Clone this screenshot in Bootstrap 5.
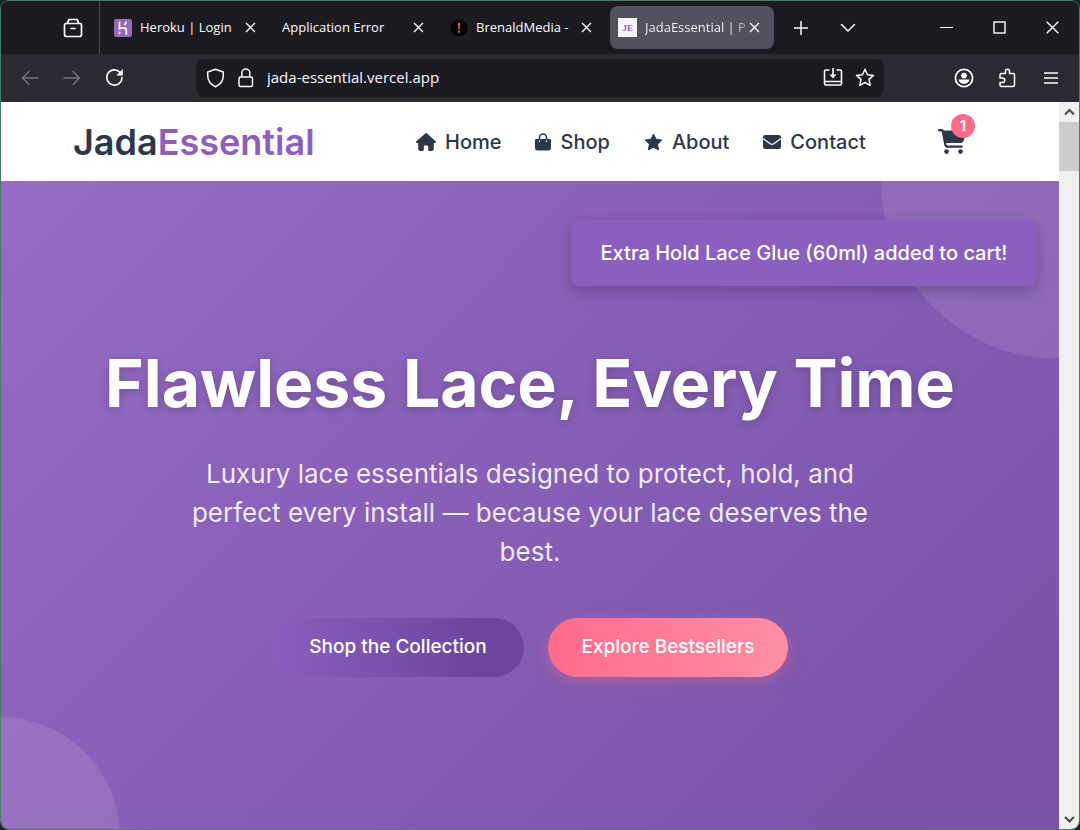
<!DOCTYPE html>
<html lang="en">
<head>
<meta charset="utf-8">
<meta name="viewport" content="width=device-width, initial-scale=1">
<title>JadaEssential</title>
<link href="https://cdn.jsdelivr.net/npm/bootstrap@5.3.0/dist/css/bootstrap.min.css" rel="stylesheet">
<style>
:root { --ink: #2d3748; --brand: #8b5fbf; --pink: #ff6b8b; --chrome: #2b2a33; --chrome-dark: #1c1b22; }
body { background: #12281f; font-family: Inter, sans-serif; }
svg { display: block; flex: none; }
.ui { font-family: "Open Sans", sans-serif; color: #fbfbfe; }
.window-frame { border: 1px solid #4b7d66; border-radius: 9px; }
.tab-strip { height: 53px; background: var(--chrome-dark); }
.recent { width: 99px; padding-left: 62px; border-right: 1px solid #4a4953; }
.plain-btn { border: 0; padding: 0; background: none; color: inherit; }
.tab-list { padding-left: 6px; }
.tab-item { width: 164px; height: 43px; padding: 0 14px 0 8px; border-radius: 8px; font-size: 14px; }
.tab-item.current { background: #52525e; }
.tab-label { font-size: 13px; }
.tab-title { background: linear-gradient(90deg, #fbfbfe 84%, #77767f) text; color: transparent; -webkit-background-clip: text; }
.tool-bar { height: 48px; background: var(--chrome); padding: 4px 18px 5px 20px; }
.muted-icon { color: #75747d; }
.address { height: 38px; margin: 0 70px 0 72px; background: var(--chrome-dark); border-radius: 8px; padding: 0 9px 0 10px; }
.address input { background: none; border: 0; outline: 0; color: #fbfbfe; font-size: 15px; min-width: 0; }
.site-header { height: 79px; padding: 0 93px 0 72px; background: #fff; color: var(--ink); }
.brand-name { width: 343px; font-size: 36px; line-height: 44px; font-weight: 600; color: var(--ink); }
.brand-name span { color: var(--brand); }
.site-nav { gap: 34px; }
.site-link { gap: 9px; color: var(--ink); font-size: 20px; font-weight: 500; white-space: nowrap; }
.cart-link { color: var(--ink); }
.count { top: -15px; right: -9px; width: 24px; height: 24px; background: var(--pink); font-size: 15px; font-weight: 600; }
.hero { background: linear-gradient(135deg, #966dc5 0%, #8961b9 38%, #7752a7 100%); padding: 162px 72px 148px; }
.orb { position: absolute; border-radius: 50%; background: rgba(255,255,255,.1); }
.orb-top { width: 356px; height: 356px; top: -178px; right: -178px; }
.orb-bottom { width: 240px; height: 240px; bottom: -128px; left: -121px; }
.hero h1 { font-size: 66px; line-height: 80px; font-weight: 700; margin-bottom: 31px; text-shadow: 0 2px 10px rgba(0,0,0,.2); }
.hero p { max-width: 700px; font-size: 26px; line-height: 39px; margin-bottom: 47px; color: rgba(255,255,255,.88); }
.pill { height: 59px; border: 0; border-radius: 30px; color: #fff; font-size: 19px; font-weight: 500; white-space: nowrap; }
.pill-violet { width: 252px; background: linear-gradient(90deg, #8b5fbf, #6b46a0 80%); }
.pill-pink { width: 240px; background: linear-gradient(90deg, #ff6b8b, #ff8fa3); box-shadow: 0 4px 15px rgba(255,107,139,.35); }
.notice { position: absolute; top: 39px; right: 22px; width: 466px; height: 66px; border-radius: 8px; background: #8b5fbf; box-shadow: 0 5px 15px rgba(0,0,0,.22); font-size: 20px; font-weight: 500; white-space: nowrap; }
.scroll-rail { width: 20px; background: #f0f0f0; color: #505050; }
.scroll-thumb { height: 49px; background: #cdcdcd; }
</style>
</head>
<body>
<div class="window-frame d-flex flex-column min-vh-100 overflow-hidden">
  <div class="ui tab-strip d-flex align-items-center">
    <div class="recent h-100 d-flex align-items-center">
      <button class="plain-btn" aria-label="Recent browsing"><svg width="20" height="20" viewBox="0 0 20 20" fill="none" stroke="currentColor" stroke-width="1.700" stroke-linecap="round"><path d="M4.500 4.500 6 1.500h8l1.500 3M3 5.500h14A1.500 1.500 0 0 1 18.500 7v9.500a2 2 0 0 1-2 2h-13a2 2 0 0 1-2-2V7A1.500 1.500 0 0 1 3 5.500M8 10.500h4"/></svg></button>
    </div>
    <div class="tab-list d-flex gap-1">
      <div class="tab-item d-flex align-items-center">
        <svg width="18" height="18" viewBox="0 0 18 18"><rect width="18" height="18" rx="2" fill="#9569b5"/><path d="M5.500 2.500v7.200c3-1.500 6.800-1.300 6.800 1.300v4.800M12 2.500c0 1.500-.5 2.500-1.400 3.500" fill="none" stroke="#fff" stroke-width="1.700"/><path d="m4.700 12 2.400 2-2.400 2z" fill="#fff"/></svg>
        <span class="tab-label flex-fill text-nowrap ms-2">Heroku | Login</span>
        <button class="plain-btn" aria-label="Close tab"><svg width="11" height="11" viewBox="0 0 11 11" stroke="currentColor" stroke-width="1.400"><path d="m1 1 9 9m0-9-9 9"/></svg></button>
      </div>
      <div class="tab-item d-flex align-items-center">
        <span class="tab-label flex-fill text-nowrap">Application Error</span>
        <button class="plain-btn" aria-label="Close tab"><svg width="11" height="11" viewBox="0 0 11 11" stroke="currentColor" stroke-width="1.400"><path d="m1 1 9 9m0-9-9 9"/></svg></button>
      </div>
      <div class="tab-item d-flex align-items-center">
        <svg width="18" height="18" viewBox="0 0 18 18"><circle cx="9" cy="9" r="8.500" fill="#000"/><path d="M8 4h2l-.4 6.500H8.400z" fill="#ff6b2c"/><circle cx="9" cy="12.800" r="1.100" fill="#ff6b2c"/></svg>
        <span class="tab-label flex-fill text-nowrap ms-2">BrenaldMedia -</span>
        <button class="plain-btn" aria-label="Close tab"><svg width="11" height="11" viewBox="0 0 11 11" stroke="currentColor" stroke-width="1.400"><path d="m1 1 9 9m0-9-9 9"/></svg></button>
      </div>
      <div class="tab-item current d-flex align-items-center">
        <svg width="19" height="19" viewBox="0 0 19 19"><rect width="19" height="19" fill="#f7f5fc"/><text x="4.500" y="13" font-family="Liberation Serif, serif" font-weight="700" font-size="9" fill="#8461b8">JE</text></svg>
        <span class="tab-label tab-title flex-fill text-nowrap ms-2">JadaEssential | P</span>
        <button class="plain-btn" aria-label="Close tab"><svg width="11" height="11" viewBox="0 0 11 11" stroke="currentColor" stroke-width="1.400"><path d="m1 1 9 9m0-9-9 9"/></svg></button>
      </div>
    </div>
    <div class="d-flex align-items-center ms-3 gap-3">
      <button class="plain-btn ps-1 pe-3" aria-label="New tab"><svg width="14" height="14" viewBox="0 0 14 14" stroke="currentColor" stroke-width="1.500"><path d="M7 0v14M0 7h14"/></svg></button>
      <button class="plain-btn" aria-label="List tabs"><svg width="16" height="10" viewBox="0 0 16 10" fill="none" stroke="currentColor" stroke-width="1.500" stroke-linecap="round" stroke-linejoin="round"><path d="m1.500 1.500 6.500 6.500 6.500-6.500"/></svg></button>
    </div>
    <div class="d-flex align-items-center ms-auto gap-4 pe-3">
      <button class="plain-btn pe-3" aria-label="Minimize"><svg width="13" height="13" viewBox="0 0 13 13" stroke="currentColor" stroke-width="1.200"><path d="M0 6.500h13"/></svg></button>
      <button class="plain-btn pe-3" aria-label="Maximize"><svg width="13" height="13" viewBox="0 0 13 13" fill="none" stroke="currentColor" stroke-width="1.400"><rect x="1" y="1" width="11" height="11"/></svg></button>
      <button class="plain-btn me-1" aria-label="Close window"><svg width="13" height="13" viewBox="0 0 13 13" stroke="currentColor" stroke-width="1.400"><path d="m.7.7 11.600 11.600m0-11.600L.7 12.300"/></svg></button>
    </div>
  </div>

  <div class="ui tool-bar d-flex align-items-center">
    <div class="d-flex align-items-center gap-4">
      <button class="plain-btn muted-icon" aria-label="Back"><svg width="18" height="16" viewBox="0 0 18 16" fill="none" stroke="currentColor" stroke-width="1.500" stroke-linecap="round" stroke-linejoin="round"><path d="M17 8H1.500M8 1.500 1.500 8 8 14.500"/></svg></button>
      <button class="plain-btn muted-icon" aria-label="Forward"><svg width="18" height="16" viewBox="0 0 18 16" fill="none" stroke="currentColor" stroke-width="1.500" stroke-linecap="round" stroke-linejoin="round"><path d="M1 8h15.500M10 1.500 16.500 8 10 14.500"/></svg></button>
      <button class="plain-btn" aria-label="Reload"><svg width="19" height="19" viewBox="0 0 19 19"><path d="M14.900 4.200A7.600 7.600 0 1 0 17 9.500" fill="none" stroke="currentColor" stroke-width="1.600" stroke-linecap="round"/><path d="M17.800 1v6.500h-6.500z" fill="currentColor"/></svg></button>
    </div>
    <div class="address d-flex align-items-center flex-fill gap-2">
      <svg width="19" height="20" viewBox="0 0 19 20" fill="none" stroke="currentColor" stroke-width="1.500" stroke-linejoin="round"><path d="M9.500 1.200 17.300 4v3.500c0 5-3 9-7.800 11.300C4.700 16.500 1.700 12.500 1.700 7.500V4z"/></svg>
      <svg class="ms-1" width="18" height="20" viewBox="0 0 17 20" fill="none" stroke="currentColor" stroke-width="1.500"><rect x="1.500" y="9" width="13.500" height="9.500" rx="1.500"/><path d="M4.300 9V5a4 4 0 0 1 8 0v4"/></svg>
      <input class="flex-fill ms-1 p-0" type="text" aria-label="Address" value="jada-essential.vercel.app">
      <button class="plain-btn" aria-label="Install app"><svg width="20" height="19" viewBox="0 0 20 19" fill="none" stroke="currentColor" stroke-width="1.600" stroke-linejoin="round"><path d="M6.500 2H3a1.500 1.500 0 0 0-1.500 1.500v12A1.500 1.500 0 0 0 3 17h14a1.500 1.500 0 0 0 1.500-1.500v-12A1.500 1.500 0 0 0 17 2h-3.500M1.500 13.500h17M10 0v9"/><path d="M6.500 6.500h7L10 10.500z" fill="currentColor" stroke="none"/></svg></button>
      <button class="plain-btn ms-1" aria-label="Bookmark"><svg width="20" height="19" viewBox="0 0 20 19" fill="none" stroke="currentColor" stroke-width="1.500" stroke-linejoin="round"><path d="m10 1.200 2.500 5.500 6 .7-4.500 4 1.200 6L10 14.500l-5.200 2.900 1.200-6-4.500-4 6-.7z"/></svg></button>
    </div>
    <div class="d-flex align-items-center gap-4">
      <button class="plain-btn" aria-label="Account"><svg width="20" height="20" viewBox="0 0 20 20"><circle cx="10" cy="10" r="8.600" fill="none" stroke="currentColor" stroke-width="1.800"/><circle cx="10" cy="7.600" r="2.900" fill="currentColor"/><path d="M4.500 11.500h11c-.4 2.800-2.600 4.400-5.500 4.400s-5.100-1.600-5.500-4.400" fill="currentColor"/></svg></button>
      <button class="plain-btn" aria-label="Extensions"><svg width="19" height="20" viewBox="0 0 19 20" fill="none" stroke="currentColor" stroke-width="1.500" stroke-linejoin="round"><path d="M2 9V7a1.500 1.500 0 0 1 1.500-1.500h4V3.200a2 2 0 0 1 4 0v2.300H15a1.500 1.500 0 0 1 1.500 1.500v10a1.500 1.500 0 0 1-1.500 1.500H3.500A1.500 1.500 0 0 1 2 17v-2.500h2.500a2 2 0 0 0 0-4.500H2z"/></svg></button>
      <button class="plain-btn" aria-label="Menu"><svg width="20" height="16" viewBox="0 0 20 16" stroke="currentColor" stroke-width="1.400"><path d="M3 3h14M3 8h14M3 13h14"/></svg></button>
    </div>
  </div>

  <div class="d-flex flex-fill">
    <div class="d-flex flex-column flex-fill">
      <header class="site-header d-flex align-items-center">
        <a class="brand-name text-decoration-none" href="#">Jada<span>Essential</span></a>
        <nav class="site-nav d-flex">
          <a class="site-link d-flex align-items-center text-decoration-none" href="#"><svg width="20" height="18" viewBox="0 0 576 512" fill="currentColor"><path d="M575.800 255.500c0 18-15 32.100-32 32.100h-32l.7 160.200c0 35.300-22 64.200-56.500 64.200h-72c-17.700 0-32-14.300-32-32v-88c0-17.700-14.300-32-32-32h-64c-17.700 0-32 14.300-32 32v88c0 17.700-14.300 32-32 32h-72c-34.500 0-56-28.700-56-64V287.600H32c-18 0-32-14-32-32.100 0-9 3-17 10-24L266.400 8c7-7 15-8 22-8s15 2 21 7l255.400 224.500c8 7 12 15 11 24z"/></svg>Home</a>
          <a class="site-link d-flex align-items-center text-decoration-none" href="#"><svg width="16" height="18" viewBox="0 0 16 18"><path d="M1.300 6h13.400A1.300 1.300 0 0 1 16 7.300v7.700a2.500 2.500 0 0 1-2.500 2.500h-11A2.500 2.500 0 0 1 0 15V7.300A1.300 1.300 0 0 1 1.300 6" fill="currentColor"/><path d="M4.500 7V4.500a3.500 3.500 0 0 1 7 0V7" fill="none" stroke="currentColor" stroke-width="1.600"/><circle cx="4.500" cy="8.300" r=".8" fill="#fff"/><circle cx="11.500" cy="8.300" r=".8" fill="#fff"/></svg>Shop</a>
          <a class="site-link d-flex align-items-center text-decoration-none" href="#"><svg width="19" height="18" viewBox="0 0 19 18"><path d="m9.500 1 2.500 5.200 5.800.9-4.200 4 1 5.800-5.100-2.700-5.100 2.700 1-5.800-4.200-4 5.800-.9z" fill="currentColor" stroke="currentColor" stroke-linejoin="round"/></svg>About</a>
          <a class="site-link d-flex align-items-center text-decoration-none" href="#"><svg width="18" height="14" viewBox="0 0 18 14"><rect width="18" height="14" rx="2" fill="currentColor"/><path d="m0 3.500 7.300 5.300a3 3 0 0 0 3.400 0L18 3.500" fill="none" stroke="#fff" stroke-width="1.200"/></svg>Contact</a>
        </nav>
        <a class="cart-link position-relative ms-auto" href="#" aria-label="Cart, 1 item"><svg width="28" height="25" viewBox="0 0 576 512" fill="currentColor"><path d="M0 24C0 10.700 10.700 0 24 0h45.500c22 0 41.500 12.800 50.600 32h411c26.300 0 45.500 25 38.600 50.400l-41 152.300c-8.500 31.400-37 53.300-69.500 53.300H170.700l5.400 28.500c2.200 11.300 12.100 19.500 23.600 19.500H488c13.300 0 24 10.700 24 24s-10.700 24-24 24H199.700c-34.600 0-64.300-24.600-70.700-58.500L77.400 54.500C76.700 50.700 73.400 48 69.500 48H24C10.700 48 0 37.300 0 24"/><circle cx="176" cy="464" r="48"/><circle cx="464" cy="464" r="48"/></svg><span class="count position-absolute rounded-circle text-white d-flex align-items-center justify-content-center">1</span></a>
      </header>
      <main class="hero flex-fill position-relative overflow-hidden text-center text-white">
        <div class="orb orb-top"></div>
        <div class="orb orb-bottom"></div>
        <h1 class="position-relative text-nowrap">Flawless Lace, Every Time</h1>
        <p class="position-relative mx-auto">Luxury lace essentials designed to protect, hold, and perfect every install — because your lace deserves the best.</p>
        <div class="position-relative d-flex justify-content-center gap-4">
          <button class="pill pill-violet">Shop the Collection</button>
          <button class="pill pill-pink">Explore Bestsellers</button>
        </div>
        <div class="notice d-flex align-items-center justify-content-center" role="status">Extra Hold Lace Glue (60ml) added to cart!</div>
      </main>
    </div>
    <div class="scroll-rail d-flex flex-column align-items-center" aria-hidden="true">
      <svg width="19" height="20" viewBox="0 0 19 20" fill="none" stroke="currentColor" stroke-width="2.200"><path d="m5 12.500 4.500-4.500 4.500 4.500"/></svg>
      <div class="scroll-thumb w-100"></div>
      <svg class="mt-auto" width="19" height="20" viewBox="0 0 19 20" fill="none" stroke="currentColor" stroke-width="2.200"><path d="m5 8 4.500 4.500L14 8"/></svg>
    </div>
  </div>
</div>
<script src="https://cdn.jsdelivr.net/npm/bootstrap@5.3.0/dist/js/bootstrap.bundle.min.js"></script>
</body>
</html>
